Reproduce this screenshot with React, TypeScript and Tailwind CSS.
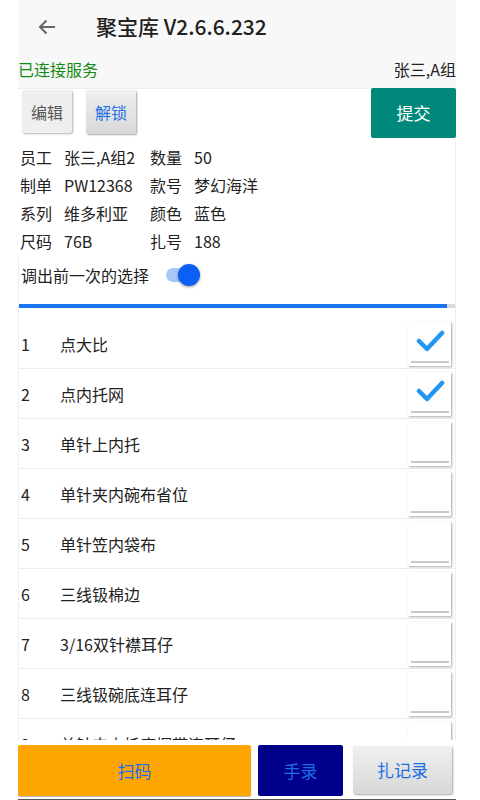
import React from 'react';

const font = { fontFamily: '"Noto Sans CJK SC", "Noto Sans", Roboto, sans-serif' };

const info = [
  ['员工', '张三,A组2', '数量', '50'],
  ['制单', 'PW12368', '款号', '梦幻海洋'],
  ['系列', '维多利亚', '颜色', '蓝色'],
  ['尺码', '76B', '扎号', '188'],
];

const steps = [
  { n: 1, name: '点大比', checked: true },
  { n: 2, name: '点内托网', checked: true },
  { n: 3, name: '单针上内托', checked: false },
  { n: 4, name: '单针夹内碗布省位', checked: false },
  { n: 5, name: '单针笠内袋布', checked: false },
  { n: 6, name: '三线钑棉边', checked: false },
  { n: 7, name: '3/16双针襟耳仔', checked: false },
  { n: 8, name: '三线钑碗底连耳仔', checked: false },
  { n: 9, name: '单针夹内托底捆带连耳仔', checked: false },
];

function Check({ checked }: { checked: boolean }) {
  return (
    <div className="w-[43px] h-[44px] bg-white shadow-[1px_1px_2px_rgba(0,0,0,0.35)] flex flex-col items-center justify-end pb-[3px]">
      <div className="flex-1 flex items-center justify-center">
        {checked && (
          <svg width="30" height="24" viewBox="0 0 30 24">
            <path d="M4 12 L12 20 L27 4" fill="none" stroke="#2196f3" strokeWidth="4.5" strokeLinecap="round" strokeLinejoin="round" />
          </svg>
        )}
      </div>
      <div className="w-[38px] h-[2px] bg-[#c8c8c8]" />
    </div>
  );
}

export default function App() {
  return (
    <div className="w-[480px] h-[800px] bg-white flex overflow-hidden" style={font}>
      <div className="ml-[18px] w-[438px] h-[800px] flex flex-col">
        {/* Header */}
        <div className="bg-[#f8f8f8] h-[88px] flex flex-col">
          <div className="h-[54px] flex items-center">
            <svg width="20" height="20" viewBox="0 0 20 20" className="ml-[19px]">
              <path d="M18 10 H3 M9.5 3.5 L3 10 L9.5 16.5" fill="none" stroke="#666" strokeWidth="2" />
            </svg>
            <span className="ml-[39px] text-[21px] font-medium text-[#222]">聚宝库 V2.6.6.232</span>
          </div>
          <div className="flex justify-between items-center h-[30px]">
            <span className="text-[16px] text-[#138a13]">已连接服务</span>
            <span className="text-[16px] text-[#222]">张三,A组</span>
          </div>
        </div>

        {/* Action buttons */}
        <div className="flex items-start justify-between h-[52px] border-t border-[#e8eef4]">
          <div className="flex gap-[14px] pl-[4px] pt-[1px]">
            <button className="w-[50px] h-[43px] bg-[#efefef] text-[#555] text-[16px] shadow-[1px_1px_2px_rgba(0,0,0,0.3)] rounded-[2px]">编辑</button>
            <button className="w-[50px] h-[44px] bg-gradient-to-b from-[#f0f0f0] to-[#d8d8d8] text-[#1a6fe8] text-[16px] shadow-[1px_1px_2px_rgba(0,0,0,0.35)] rounded-[2px]">解锁</button>
          </div>
          <button className="w-[85px] h-[50px] bg-[#00897b] text-white text-[17px] rounded-[2px] mt-[-1px]">提交</button>
        </div>

        {/* Info */}
        <div className="flex flex-col pl-[2px] pt-[3px] text-[16px] text-[#222] leading-[28px] border-r border-[#e8f0f8]">
          {info.map((r) => (
            <div key={r[0]} className="flex">
              <span className="w-[44px]">{r[0]}</span>
              <span className="w-[86px]">{r[1]}</span>
              <span className="w-[44px]">{r[2]}</span>
              <span>{r[3]}</span>
            </div>
          ))}
        </div>

        {/* Toggle */}
        <div className="flex items-center h-[40px] pl-[2px] border-l border-r border-[#e8f0f8]">
          <span className="text-[16px] text-[#222]">调出前一次的选择</span>
          <div className="relative ml-[17px] w-[34px] h-[24px] flex items-center">
            <div className="w-[26px] h-[14px] rounded-full bg-[#a9c8fa]" />
            <div className="absolute right-0 top-[1px] w-[22px] h-[22px] rounded-full bg-[#0b5ff5] shadow-[0_1px_3px_rgba(0,0,0,0.4)]" />
          </div>
        </div>

        {/* Progress */}
        <div className="h-[15px] pt-[9px] border-l border-r border-[#e8f0f8]">
          <div className="h-[4px] bg-[#dadada] flex">
            <div className="w-[428px] h-full bg-[#1a73f0]" />
          </div>
        </div>

        {/* List */}
        <div className="h-[725px] shrink overflow-hidden flex-1 border-l border-r border-[#e8f0f8] flex flex-col">
          <div className="h-[9px] shrink-0" />
          {steps.map((s) => (
            <div key={s.n} className="h-[50px] shrink-0 flex items-center border-b border-[#e8eef4] pr-[4px]">
              <span className="w-[41px] pl-[2px] text-[16px] text-[#222]">{s.n}</span>
              <span className="flex-1 text-[16px] text-[#222]">{s.name}</span>
              <Check checked={s.checked} />
            </div>
          ))}
        </div>

        {/* Bottom */}
        <div className="h-[60px] shrink-0 flex items-start pt-[5px] gap-[7px] border-b border-[#555]">
          <button className="w-[233px] h-[51px] bg-[#ffa500] text-[#1a6fe8] text-[17px] rounded-[2px] shadow-[0_1px_1px_rgba(0,0,0,0.3)]">扫码</button>
          <button className="w-[85px] h-[51px] bg-[#00008b] text-[#1a6fe8] text-[17px] rounded-[2px]">手录</button>
          <button className="ml-[3px] w-[99px] h-[48px] mt-[1px] bg-gradient-to-b from-[#f0f0f0] to-[#d8d8d8] text-[#1a6fe8] text-[17px] rounded-[2px] shadow-[1px_1px_2px_rgba(0,0,0,0.35)]">扎记录</button>
        </div>
      </div>
    </div>
  );
}
